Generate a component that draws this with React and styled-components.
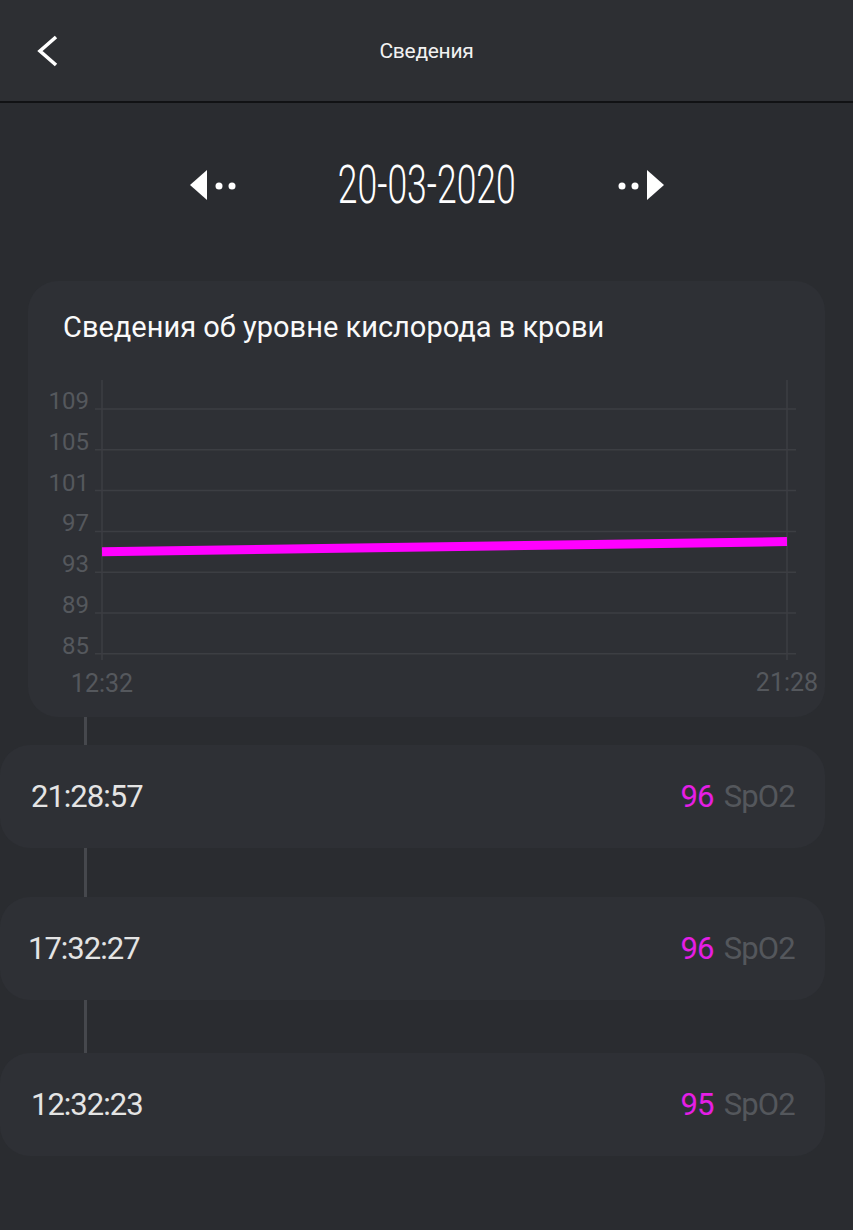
import React from 'react';
import styled, { createGlobalStyle } from 'styled-components';

const GlobalStyle = createGlobalStyle`
  html, body {
    margin: 0;
    padding: 0;
    background: #2a2c30;
  }
  body {
    font-family: Roboto, "Noto Sans", "Liberation Sans", sans-serif;
    color: #fff;
  }
`;

const Page = styled.div`
  width: 853px;
  min-height: 1230px;
  background: #2a2c30;
  display: flex;
  flex-direction: column;
  padding-bottom: 40px;
  box-sizing: border-box;
`;

const Header = styled.header`
  height: 101px;
  background: #2d2f33;
  border-bottom: 2px solid #111214;
  display: grid;
  grid-template-columns: 1fr auto 1fr;
  align-items: center;
`;

const BackButton = styled.button`
  background: none;
  border: none;
  padding: 0 0 0 34px;
  justify-self: start;
  display: flex;
  cursor: pointer;
`;

const Title = styled.h1`
  margin: 0;
  font-size: 21px;
  font-weight: 400;
  color: #f2f2f2;
  letter-spacing: -0.3px;
`;

const DateNav = styled.div`
  height: 164px;
  display: flex;
  align-items: center;
  justify-content: center;
  gap: 100px;
`;

const ArrowButton = styled.button`
  background: none;
  border: none;
  padding: 0;
  display: flex;
  cursor: pointer;
`;

const DateText = styled.div`
  width: 178px;
  display: flex;
  justify-content: center;
  white-space: nowrap;
  & > span {
    display: inline-block;
    font-size: 53px;
    font-weight: 300;
    color: #fff;
    transform: scaleX(0.67);
    transform-origin: center;
    line-height: 1;
  }
`;

const ChartCard = styled.section`
  margin: 14px 28px 0 28px;
  background: #2e3035;
  border-radius: 30px;
  padding: 30px 0 7px 0;
`;

const CardTitle = styled.h2`
  margin: 0 0 27px 35px;
  font-size: 29px;
  line-height: 32px;
  font-weight: 400;
  color: #fafafa;
`;

const Chart = styled.svg`
  display: block;
  width: 797px;
  height: 340px;
`;

const Connector = styled.div`
  width: 3px;
  height: ${({ $h }) => $h}px;
  margin-left: 84px;
  background: #46484d;
`;

const Row = styled.div`
  width: 825px;
  height: 103px;
  box-sizing: border-box;
  background: #2e3035;
  border-radius: 30px;
  display: flex;
  align-items: center;
  justify-content: space-between;
  padding: 0 30px 0 ${({ $pl }) => $pl}px;
`;

const Time = styled.span`
  font-size: 31px;
  color: #e4e4e4;
  letter-spacing: -1px;
`;

const Reading = styled.span`
  font-size: 31px;
  letter-spacing: -0.8px;
`;

const Value = styled.span`
  color: #e51ee5;
`;

const Unit = styled.span`
  color: #54575c;
  margin-left: 10px;
`;

const BackIcon = () => (
  <svg width="26" height="34" viewBox="0 0 26 34">
    <polyline points="22,3 6,17 22,31" fill="none" stroke="#fff" strokeWidth="3.6" strokeLinejoin="miter" />
  </svg>
);

const ArrowIcon = ({ dir }) => (
  <svg width="48" height="32" viewBox="0 0 48 32">
    {dir === 'left' ? (
      <>
        <polygon points="0,16 17,1 17,31" fill="#fff" />
        <circle cx="29" cy="17" r="3.5" fill="#fff" />
        <circle cx="42" cy="17" r="3.5" fill="#fff" />
      </>
    ) : (
      <>
        <circle cx="6" cy="17" r="3.5" fill="#fff" />
        <circle cx="19" cy="17" r="3.5" fill="#fff" />
        <polygon points="48,16 31,1 31,31" fill="#fff" />
      </>
    )}
  </svg>
);

const yTicks = [109, 105, 101, 97, 93, 89, 85];
const gridTop = 39;
const gridStep = 40.8;
const xLeft = 74;
const xRight = 759;
const valueToY = (v) => gridTop + ((109 - v) / 4) * gridStep;

const points = [
  { t: '12:32', v: 95 },
  { t: '21:28', v: 96 },
];

const OxygenChart = () => (
  <Chart viewBox="0 0 797 340">
    {yTicks.map((v, i) => {
      const y = gridTop + i * gridStep;
      return (
        <g key={v}>
          <line x1="67" x2="768" y1={y} y2={y} stroke="#3c3e43" strokeWidth="1.5" />
          <text x="61" y={y} textAnchor="end" fontSize="24" fill="#55585d" fontFamily="Roboto, sans-serif">
            {v}
          </text>
        </g>
      );
    })}
    <line x1={xLeft} x2={xLeft} y1="10" y2="290" stroke="#3c3e43" strokeWidth="1.5" />
    <line x1={xRight} x2={xRight} y1="10" y2="290" stroke="#3c3e43" strokeWidth="1.5" />
    <line
      x1={xLeft}
      y1={valueToY(points[0].v)}
      x2={xRight}
      y2={valueToY(points[1].v)}
      stroke="#ff00ff"
      strokeWidth="9"
    />
    <text x={xLeft} y="322" textAnchor="middle" fontSize="25" fill="#55585d" fontFamily="Roboto, sans-serif">
      {points[0].t}
    </text>
    <text x={xRight} y="321" textAnchor="middle" fontSize="25" fill="#55585d" fontFamily="Roboto, sans-serif">
      {points[1].t}
    </text>
  </Chart>
);

const readings = [
  { time: '21:28:57', value: 96, gap: 28, pl: 31 },
  { time: '17:32:27', value: 96, gap: 49, pl: 28 },
  { time: '12:32:23', value: 95, gap: 53, pl: 31 },
];

export default function App() {
  return (
    <>
      <GlobalStyle />
      <Page>
        <Header>
          <BackButton aria-label="Назад">
            <BackIcon />
          </BackButton>
          <Title>Сведения</Title>
          <div />
        </Header>

        <DateNav>
          <ArrowButton aria-label="Предыдущий день">
            <ArrowIcon dir="left" />
          </ArrowButton>
          <DateText>
            <span>20-03-2020</span>
          </DateText>
          <ArrowButton aria-label="Следующий день">
            <ArrowIcon dir="right" />
          </ArrowButton>
        </DateNav>

        <ChartCard>
          <CardTitle>Сведения об уровне кислорода в крови</CardTitle>
          <OxygenChart />
        </ChartCard>

        {readings.map((r) => (
          <React.Fragment key={r.time}>
            <Connector $h={r.gap} />
            <Row $pl={r.pl}>
              <Time>{r.time}</Time>
              <Reading>
                <Value>{r.value}</Value>
                <Unit>SpO2</Unit>
              </Reading>
            </Row>
          </React.Fragment>
        ))}
      </Page>
    </>
  );
}
